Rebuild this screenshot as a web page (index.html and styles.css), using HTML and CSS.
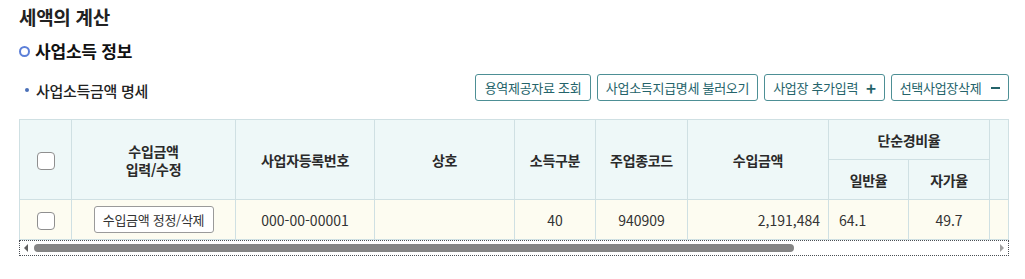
FILE: index.html
```html
<!DOCTYPE html>
<html lang="ko">
<head>
<meta charset="utf-8">
<title>세액의 계산</title>
<link rel="stylesheet" href="styles.css">
</head>
<body>
<div class="page">
  <h2 class="title">세액의 계산</h2>
  <h3 class="section"><span class="ring"></span>사업소득 정보</h3>
  <div class="toolbar">
    <div class="subtitle"><span class="dot"></span>사업소득금액 명세</div>
    <div class="btns">
      <button class="btn">용역제공자료 조회</button>
      <button class="btn">사업소득지급명세 불러오기</button>
      <button class="btn">사업장 추가입력 <span class="sym">+</span></button>
      <button class="btn">선택사업장삭제 <span class="sym minus"></span></button>
    </div>
  </div>
  <div class="grid">
    <div class="grid-body">
      <table class="tbl">
        <colgroup>
          <col class="c-chk"><col class="c-edit"><col class="c-reg"><col class="c-name">
          <col class="c-kind"><col class="c-code"><col class="c-amt"><col class="c-rate">
          <col class="c-rate2"><col class="c-x1"><col class="c-x2">
        </colgroup>
        <thead>
          <tr class="h1">
            <th rowspan="2"><span class="chk"></span></th>
            <th rowspan="2">수입금액<br>입력/수정</th>
            <th rowspan="2">사업자등록번호</th>
            <th rowspan="2">상호</th>
            <th rowspan="2">소득구분</th>
            <th rowspan="2">주업종코드</th>
            <th rowspan="2">수입금액</th>
            <th colspan="2">단순경비율</th>
            <th rowspan="2"></th>
            <th rowspan="2"></th>
          </tr>
          <tr class="h2">
            <th>일반율</th>
            <th>자가율</th>
          </tr>
        </thead>
        <tbody>
          <tr class="row">
            <td class="ctr"><span class="chk"></span></td>
            <td class="ctr"><button class="edit-btn">수입금액 정정/삭제</button></td>
            <td class="ctr">000-00-00001</td>
            <td></td>
            <td class="ctr">40</td>
            <td class="ctr">940909</td>
            <td class="rgt">2,191,484</td>
            <td class="lft">64.1</td>
            <td class="ctr">49.7</td>
            <td></td>
            <td></td>
          </tr>
        </tbody>
      </table>
    </div>
    <div class="hscroll">
      <span class="arrow left"></span>
      <div class="track"><div class="thumb"></div></div>
      <span class="arrow right"></span>
    </div>
  </div>
</div>
</body>
</html>
```

FILE: styles.css
```css
* { box-sizing: border-box; }
html, body { margin: 0; padding: 0; background: #ffffff; }
body {
  font-family: "Noto Sans CJK KR", "Noto Sans", sans-serif;
  color: #222222;
}
.page {
  padding: 3px 16px 0 19px;
  display: flex;
  flex-direction: column;
}
.title {
  margin: 0;
  font-size: 19px;
  font-weight: 700;
  line-height: 28px;
  color: #222;
  letter-spacing: -0.3px;
}
.section {
  margin: 7px 0 0 0;
  font-size: 17px;
  font-weight: 700;
  line-height: 26px;
  color: #111;
  display: flex;
  align-items: center;
  letter-spacing: -0.2px;
}
.ring {
  width: 11px;
  height: 11px;
  border: 2.5px solid #5c7fd8;
  border-radius: 50%;
  margin-right: 5px;
  margin-top: 1px;
}
.toolbar {
  margin-top: 10px;
  display: flex;
  justify-content: space-between;
  align-items: center;
}
.subtitle {
  font-size: 15px;
  font-weight: 500;
  color: #222;
  display: flex;
  align-items: center;
  padding-left: 6px;
  padding-top: 5px;
  letter-spacing: -0.3px;
}
.dot {
  width: 4px;
  height: 4px;
  border-radius: 50%;
  background: #4a70b8;
  margin-right: 7px;
}
.btns {
  display: flex;
  gap: 6px;
}
.btn {
  font-family: "Noto Sans CJK KR", "Noto Sans", sans-serif;
  height: 27px;
  padding: 0 4px;
  font-size: 13px;
  color: #24636a;
  background: #ffffff;
  border: 1px solid #4d8f95;
  border-radius: 3px;
  display: flex;
  align-items: center;
  justify-content: center;
  gap: 8px;
  white-space: nowrap;
  letter-spacing: -0.3px;
}
.btn:nth-child(1) { width: 116px; }
.btn:nth-child(2) { width: 161px; }
.btn:nth-child(3) { width: 121px; }
.btn:nth-child(4) { width: 118px; }
.sym {
  font-size: 17px;
  font-weight: 700;
  line-height: 1;
  color: #24636a;
}
.sym.minus {
  display: inline-block;
  width: 9px;
  height: 2px;
  background: #24636a;
  margin-left: 2px;
}
.grid {
  margin-top: 18px;
  border-right: 1px solid #cfe0e3;
}
.grid-body {
  overflow: hidden;
}
.tbl {
  border-collapse: collapse;
  table-layout: fixed;
  width: 1265px;
  font-size: 14px;
}
.c-chk { width: 52px; }
.c-edit { width: 164px; }
.c-reg { width: 139px; }
.c-name { width: 140px; }
.c-kind { width: 81px; }
.c-code { width: 92px; }
.c-amt { width: 141px; }
.c-rate { width: 80px; }
.c-rate2 { width: 81px; }
.c-x1 { width: 137px; }
.c-x2 { width: 158px; }
.tbl th, .tbl td {
  border: 1px solid #cfe0e3;
  padding: 0 8px;
}
.tbl th {
  background: #eef8f8;
  font-weight: 700;
  color: #2a2a2a;
  line-height: 18px;
  text-align: center;
  letter-spacing: -0.3px;
}
.h1 th { height: 40px; }
.h2 th { height: 40px; }
.tbl td {
  background: #fdfcf1;
  height: 40px;
  color: #333;
}
.ctr { text-align: center; }
.rgt { text-align: right; }
.lft { text-align: left; padding-left: 10px !important; }
.chk {
  display: inline-block;
  width: 18px;
  height: 18px;
  border: 1px solid #8f8f8f;
  border-radius: 4px;
  background: #fff;
  vertical-align: middle;
}
.edit-btn {
  font-family: "Noto Sans CJK KR", "Noto Sans", sans-serif;
  height: 27px;
  width: 120px;
  font-size: 13px;
  color: #333;
  background: #fff;
  border: 1px solid #9a9a9a;
  border-radius: 3px;
  padding: 0;
  vertical-align: middle;
  white-space: nowrap;
  letter-spacing: -0.3px;
}
.hscroll {
  height: 16px;
  border: 1px dotted #4a4f55;
  display: flex;
  align-items: center;
  background: #fff;
  margin-right: -1px;
}
.arrow {
  width: 0;
  height: 0;
  border-top: 4px solid transparent;
  border-bottom: 4px solid transparent;
}
.arrow.left {
  border-right: 4px solid #606060;
  margin: 0 6px 0 4px;
}
.arrow.right {
  border-left: 4px solid #a0a0a0;
  margin: 0 4px 0 6px;
}
.track {
  flex: 1;
  height: 8px;
}
.thumb {
  height: 8px;
  width: 760px;
  border-radius: 4px;
  background: #858585;
}
```
